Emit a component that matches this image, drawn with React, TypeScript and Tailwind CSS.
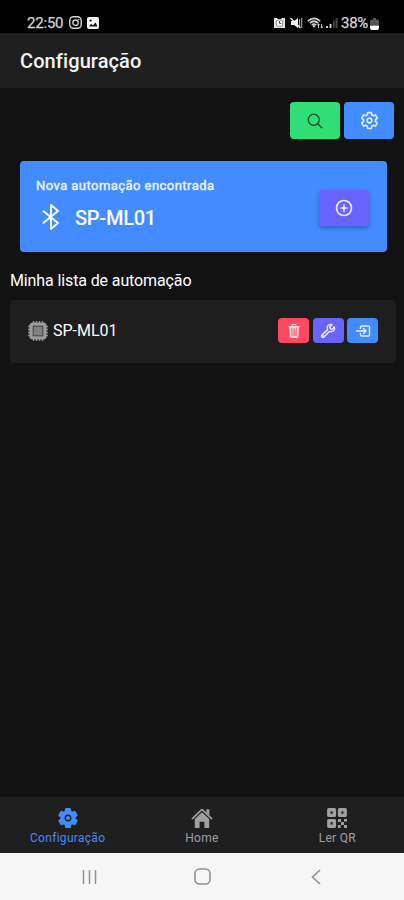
import type { ReactNode } from "react";
import {
  IoSearchOutline,
  IoSettingsOutline,
  IoAddCircleOutline,
  IoTrash,
  IoBuildOutline,
  IoEnterOutline,
  IoSettings,
} from "react-icons/io5";

function StatusBar() {
  return (
    <div className="flex h-[33px] shrink-0 items-end bg-black pb-[1px] pl-[27px] pr-[25px] text-[#d4d4d4]">
      <span className="w-[37px] whitespace-nowrap text-[15px] leading-[17px] tracking-[-0.2px] [-webkit-text-stroke:0.25px_#d4d4d4]">22:50</span>
      <svg className="mb-[3px] ml-[5px] h-[13px] w-[13px]" viewBox="0 0 13 13" fill="none" stroke="currentColor">
        <rect x="0.8" y="0.8" width="11.4" height="11.4" rx="3.6" strokeWidth="1.4" />
        <circle cx="6.5" cy="6.7" r="2.7" strokeWidth="1.3" />
        <circle cx="9.6" cy="3.5" r="0.5" fill="currentColor" strokeWidth="0.5" />
      </svg>
      <svg className="mb-[3px] ml-[5px] h-[12px] w-[12px]" viewBox="0 0 12 12">
        <rect width="12" height="12" rx="2" fill="#f4f4f4" />
        <path d="M2 9.5 4.3 6.7 6 8.4 8.5 5.5 10.5 9.5Z" fill="#111" />
        <circle cx="3.6" cy="3.6" r="1.1" fill="#111" />
      </svg>
      <div className="grow" />
      <svg className="mb-[3px] h-[12px] w-[11px]" viewBox="0 0 11 12">
        <path d="M0 1h3l1 1h3l1-1h3v10H0Z" fill="#e2e2e2" />
        <circle cx="5.5" cy="6.2" r="3.5" fill="#f5f5f5" stroke="#777" strokeWidth="0.8" />
        <path d="M5.5 4.2v2.2h1.8" stroke="#444" fill="none" />
      </svg>
      <svg className="mb-[3px] ml-[5px] h-[12px] w-[13px]" viewBox="0 0 13 12">
        <path d="M1 4h3l4-3v10L4 8H1Z" fill="#eee" />
        <path d="M9.6 2v8M11.7 1v10" stroke="#999" strokeWidth="1.2" />
        <path d="m.5 1 10 10" stroke="#eee" strokeWidth="1.5" />
      </svg>
      <svg className="mb-[3px] ml-[4px] h-[12px] w-[17px]" viewBox="0 0 17 12" fill="none" stroke="#ccc">
        <path d="M.8 4.2Q7 -1.4 13.2 4.2M2.8 6.1Q7 2.4 11.2 6.1M4.8 8.1Q7 6.2 9.2 8.1" strokeWidth="1.8" />
        <path d="M7 8.3v2" strokeWidth="2.2" />
        <path d="M11.5 11V7M10.2 8.2l1.3-1.3 1.3 1.3M14.7 7v4M13.5 9.8l1.2 1.2L16 9.8" />
      </svg>
      <svg className="mb-[3px] ml-[1px] h-[12px] w-[13px]" viewBox="0 0 13 12">
        <path d="M1 9h2v2H1ZM4.5 7h2v4h-2Z" fill="#ccc" />
        <path d="M8 3.5h1.8V11H8ZM10.5 1h2.2v10h-2.2Z" fill="#444" />
      </svg>
      <span className="ml-[3px] w-[29px] whitespace-nowrap text-[15px] leading-[17px] tracking-[-0.3px] [-webkit-text-stroke:0.25px_#d4d4d4]">38%</span>
      <svg className="mb-[1px] h-[14px] w-[9px] shrink-0" viewBox="0 0 9 14">
        <path d="M3 1h3v1.5h1Q9 2.5 9 4.5V8H0V4.5Q0 2.5 2 2.5h1Z" fill="#555" />
        <path d="M0 8.5h9v2.2Q9 13 7 13H2Q0 13 0 10.7Z" fill="#fff" />
      </svg>
    </div>
  );
}

function BluetoothIcon() {
  return (
    <svg
      className="-mt-[3px] ml-[6px] h-[28px] w-[18px]"
      viewBox="0 0 18 28"
      fill="none"
      stroke="currentColor"
      strokeWidth="1.9"
      strokeLinejoin="round"
      strokeLinecap="round"
    >
      <path d="M1.6 8.2 16 20 9 26V2l7 6L1.6 19.8" />
    </svg>
  );
}

function ChipIcon() {
  return (
    <svg className="h-[22px] w-[22px]" viewBox="0 0 22 22" fill="none">
      <path
        d="M6.5 1v20M9.5 1v20M12.5 1v20M15.5 1v20M1 6.5h20M1 9.5h20M1 12.5h20M1 15.5h20"
        stroke="#8a8a8a"
        strokeWidth="1.5"
      />
      <rect x="2.4" y="2.4" width="17.2" height="17.2" rx="3.6" fill="#9c9c9c" />
      <rect x="6.2" y="6.2" width="9.6" height="9.6" fill="#808080" stroke="#484848" strokeWidth="1.1" />
    </svg>
  );
}

function HomeIcon() {
  return (
    <svg className="h-[22px] w-[22px]" viewBox="0 0 22 22" fill="currentColor">
      <path d="M11 5.2 18.2 12v8.2q0 .8-.8.8h-4v-6.2H8.6V21h-4q-.8 0-.8-.8V12Z" />
      <path
        d="m1.4 11.6 9-8.6q.6-.5 1.2 0l9 8.6"
        fill="none"
        stroke="currentColor"
        strokeWidth="1.7"
        strokeLinecap="round"
      />
      <path d="M15.4 2.2h3v6.2l-3-2.8Z" />
    </svg>
  );
}

function QrIcon() {
  return (
    <svg className="h-[22px] w-[22px]" viewBox="0 0 22 22" fill="none" stroke="currentColor">
      <path
        d="M2.8 2.8h5.6v5.6H2.8ZM13.6 2.8h5.6v5.6h-5.6ZM2.8 13.6h5.6v5.6H2.8Z"
        strokeWidth="3.4"
        strokeLinejoin="round"
      />
      <path d="M12 12h3v3h-3ZM15 15h3v3h-3ZM18 12h3v2.5h-3ZM12 18h2.6v3H12ZM18 18h3v3h-3Z" fill="currentColor" stroke="none" />
    </svg>
  );
}

function TabButton({ icon, label, className }: { icon: ReactNode; label: string; className: string }) {
  return (
    <button className={`flex flex-1 flex-col items-center pt-[10px] ${className}`}>
      {icon}
      <span className="mt-[2px] text-[12px] leading-[14px] tracking-[0.3px]">{label}</span>
    </button>
  );
}

export default function App() {
  return (
    <div className="flex h-[900px] w-[404px] flex-col overflow-hidden bg-[#121212] font-[Roboto,sans-serif] text-white">
      <StatusBar />
      <header className="flex h-[55px] shrink-0 items-center bg-[#1f1f1f] pl-5">
        <h1 className="text-[20px] font-medium leading-6 tracking-[0.1px] text-[#f4f4f4]">Configuração</h1>
      </header>

      <main className="flex grow flex-col">
        <div className="mt-[14px] flex justify-end gap-1 pr-[10px]">
          <button className="flex h-[37px] w-[50px] items-center justify-center rounded-[4px] bg-[#2fdf75] text-[#10502a]">
            <IoSearchOutline size={18} className="[&_*]:[stroke-width:38px]" />
          </button>
          <button className="flex h-[37px] w-[50px] items-center justify-center rounded-[4px] bg-[#428cff] text-[#e8f0ff]">
            <IoSettingsOutline size={19} className="[&_*]:[stroke-width:44px]" />
          </button>
        </div>

        <section className="ml-5 mt-[22px] flex h-[91px] w-[367px] items-start justify-between rounded-[4px] bg-[#428cff] pl-4 pr-[18px]">
          <div>
            <p className="mt-[17px] text-[13px] leading-4 tracking-[0.45px] text-[#eef4ff] [-webkit-text-stroke:0.4px_#eef4ff]">
              Nova automação encontrada
            </p>
            <div className="mt-[8px] flex items-center">
              <BluetoothIcon />
              <h2 className="ml-[15px] text-[20px] font-medium leading-[32px] tracking-[-0.25px]">SP-ML01</h2>
            </div>
          </div>
          <button className="mt-[29px] flex h-[36px] w-[50px] items-center justify-center rounded-[3px] bg-[#6a64ff] text-[#eceaff] shadow-[0_2px_4px_rgba(0,0,0,0.3)]">
            <IoAddCircleOutline size={20} className="-ml-[1px] [&_*]:[stroke-width:42px]" />
          </button>
        </section>

        <h3 className="ml-[10px] mt-[18px] text-[16px] leading-[22px] tracking-[-0.12px]">Minha lista de automação</h3>

        <section className="ml-[10px] mt-[8px] flex h-[63px] w-[386px] items-center rounded-[4px] bg-[#1e1e1e] pb-[2px] pl-[17px] pr-[18px]">
          <ChipIcon />
          <span className="ml-[4px] text-[16px] leading-5">SP-ML01</span>
          <div className="ml-auto flex gap-[3.5px]">
            <button className="flex h-[25px] w-[31px] items-center justify-center rounded-[4px] bg-[#ff4961]">
              <IoTrash size={16} className="text-[#ffd3d9]" />
            </button>
            <button className="flex h-[25px] w-[31px] items-center justify-center rounded-[4px] bg-[#6a64ff] text-[#eceaff]">
              <IoBuildOutline size={16} className="[&_*]:[stroke-width:46px]" />
            </button>
            <button className="flex h-[25px] w-[31px] items-center justify-center rounded-[4px] bg-[#428cff] text-[#e8f0ff]">
              <IoEnterOutline size={16} className="[&_*]:[stroke-width:46px]" />
            </button>
          </div>
        </section>
      </main>

      <nav className="flex h-[56px] shrink-0 bg-[#1f1f1f] pl-[1px]">
        <TabButton className="text-[#428cff]" label="Configuração" icon={<IoSettings size={22} />} />
        <TabButton className="pl-[1px] text-[#a0a0a0]" label="Home" icon={<HomeIcon />} />
        <TabButton className="pl-[2px] text-[#a0a0a0]" label="Ler QR" icon={<QrIcon />} />
      </nav>

      <div className="flex h-[47px] shrink-0 items-center bg-[#f6f6f6] pl-[82px] text-[#909090]">
        <svg className="h-[16px] w-[16px]" viewBox="0 0 16 16" fill="none" stroke="currentColor" strokeWidth="1.5">
          <path d="M1.5 1v14M7.5 1v14M13.5 1v14" />
        </svg>
        <svg className="ml-[96px] h-[17px] w-[17px]" viewBox="0 0 17 17" fill="none" stroke="currentColor" strokeWidth="1.6">
          <rect x="1" y="1" width="15" height="15" rx="4.5" />
        </svg>
        <svg className="ml-[100px] h-[16px] w-[10px]" viewBox="0 0 10 16" fill="none" stroke="currentColor" strokeWidth="1.6">
          <path d="M9 1 1.5 8 9 15" />
        </svg>
      </div>
    </div>
  );
}
